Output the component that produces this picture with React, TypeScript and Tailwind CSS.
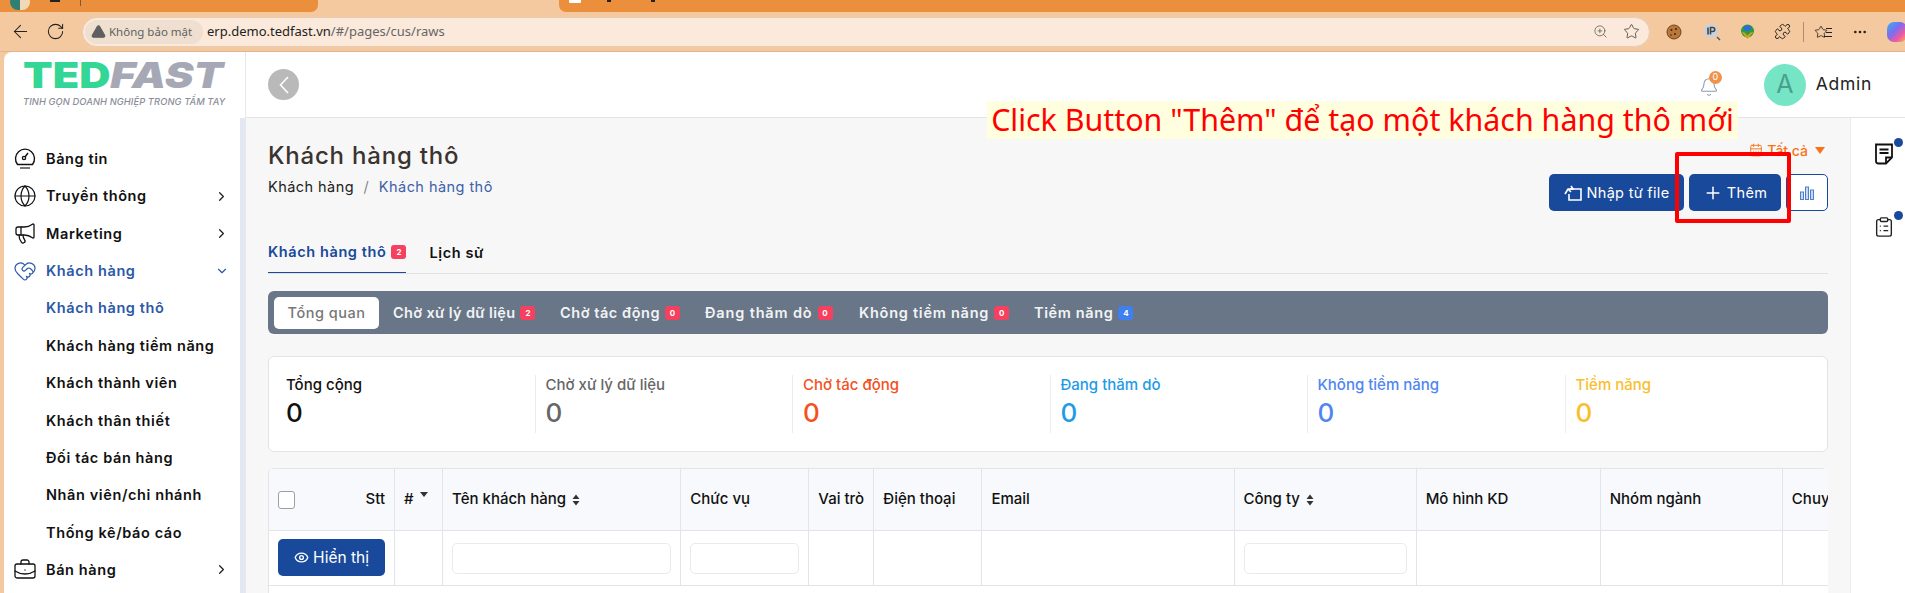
import React from "react";
import {
  ArrowLeft,
  ChevronDown,
  ChevronRight,
  ClipboardList,
  Eye,
  Globe,
  HeartHandshake,
  Megaphone,
  BriefcaseBusiness,
  Plus,
  Puzzle,
  RotateCw,
  Star,
  ZoomIn,
  Bell,
  Ellipsis,
  CalendarDays,
  TriangleAlert,
} from "lucide-react";

const ui = "font-['Inter',sans-serif]";

function GaugeIcon() {
  return (
    <svg width="22" height="22" viewBox="0 0 22 22" fill="none" stroke="#111" strokeWidth="1.4">
      <path d="M3.5 16.5a9.5 9.5 0 1 1 15 0z" />
      <circle cx="10" cy="10" r="1.6" />
      <path d="M11 9l3-4" />
      <path d="M6 20h10" stroke="#777" strokeWidth="2" />
    </svg>
  );
}

function NavItem({
  label,
  icon,
  arrow,
  active,
}: {
  label: string;
  icon?: React.ReactNode;
  arrow?: "right" | "down";
  active?: boolean;
}) {
  return (
    <div className={`flex h-[37.4px] items-center pr-[11px] ${active ? "text-[#2c58a8]" : "text-[#111]"}`}>
      <div className="flex w-[42px] shrink-0 justify-center">{icon}</div>
      <span className="flex-1 text-[14.5px] font-semibold tracking-[0.6px]">{label}</span>
      {arrow === "right" && <ChevronRight size={15} strokeWidth={2} color="#222" />}
      {arrow === "down" && <ChevronDown size={14} strokeWidth={2} color="#2c58a8" />}
    </div>
  );
}

function Badge({ n, blue }: { n: number; blue?: boolean }) {
  return (
    <span
      className={`ml-[5px] flex h-[14px] w-[15px] items-center justify-center rounded-[3px] text-[8px] font-bold tracking-normal text-white ${
        blue ? "bg-[#3f7ff0]" : "bg-[#f5405f]"
      }`}>
      {n}
    </span>
  );
}

const pills = [
  { label: "Chờ xử lý dữ liệu", n: 2, w: "w-[167px] tracking-[0.35px]" },
  { label: "Chờ tác động", n: 0, w: "w-[145px] tracking-[0.55px]" },
  { label: "Đang thăm dò", n: 0, w: "w-[154px] tracking-[0.85px]" },
  { label: "Không tiềm năng", n: 0, w: "w-[175px] tracking-[0.75px]" },
  { label: "Tiềm năng", n: 4, w: "w-[120px] tracking-[0.62px]", blue: true },
];

const stats = [
  { label: "Tổng cộng", color: "text-[#111]" },
  { label: "Chờ xử lý dữ liệu", color: "text-[#666]" },
  { label: "Chờ tác động", color: "text-[#f4511e]" },
  { label: "Đang thăm dò", color: "text-[#1e9be8]" },
  { label: "Không tiềm năng", color: "text-[#4f86f0]" },
  { label: "Tiềm năng", color: "text-[#fbbd2c]" },
];

function SortIcon() {
  return (
    <svg width="8" height="12" viewBox="0 0 8 12" fill="#333" className="ml-[6px]">
      <path d="M4 0.5 7.5 5h-7zM4 11.5.5 7h7z" />
    </svg>
  );
}

const colWidths = ["w-[126px]", "w-[48px]", "w-[238px]", "w-[128px]", "w-[65px]", "w-[108px]", "w-[252px]", "w-[182px]", "w-[184px]", "w-[182px]", "w-[120px]"];

function Th({ children, className = "" }: { children?: React.ReactNode; className?: string }) {
  return (
    <th className={`h-[63px] border-r border-b border-t border-[#e2e4e9] bg-[#f7f9fc] px-[9px] text-left text-[15px] font-medium text-[#111] ${className}`}>
      {children}
    </th>
  );
}

function FilterInput() {
  return <div className="h-[31px] rounded-[5px] border border-[#e9eaec] bg-white" />;
}

export default function App() {
  return (
    <div className={`flex h-[593px] w-[1905px] flex-col overflow-hidden bg-[#f5c9a0] ${ui}`}>
      {/* Browser tabs */}
      <div className="relative flex h-3 shrink-0 overflow-hidden bg-[#f5c9a0]">
        <div className="flex h-3 w-[318px] items-start rounded-br-[7px] bg-[#ec8f3c]">
          <div className="ml-[10px] -mt-[6px] h-[16px] w-[20px] rounded-full bg-[linear-gradient(90deg,#2f7f74_50%,#f0d9b5_50%)]" />
          <div className="ml-[20px] h-[2px] w-[10px] bg-[#222]" />
          <div className="ml-[20px] h-[6px] w-px bg-[#7a5a3a]" />
        </div>
        <div className="ml-[241px] flex h-3 flex-1 items-start rounded-bl-[7px] bg-[#ec8f3c] pl-[10px]">
          <div className="h-[3px] w-[12px] rounded-b-[1px] bg-white" />
          <div className="ml-[26px] h-[2px] w-[4px] bg-[#222]" />
          <div className="ml-[40px] h-[2px] w-[4px] bg-[#222]" />
        </div>
      </div>

      {/* Browser toolbar */}
      <div className="flex h-10 shrink-0 items-center overflow-hidden border-b border-[#e0b48c] bg-[#f5c9a0]">
        <div className="flex w-[82px] shrink-0 items-center pl-[10px] text-[#222]">
          <ArrowLeft size={21} strokeWidth={1.2} />
          <RotateCw size={19} strokeWidth={1.3} className="ml-[15px]" />
        </div>
        <div className="flex h-[30px] w-[1568px] shrink-0 items-center rounded-full border border-[#e8cdb2] bg-[#fbeadb] pl-[2px] pr-[9px]">
          <div className="flex h-[24px] w-[118px] items-center gap-[3px] rounded-full bg-[#efdfd0] pl-[6px] text-[11.5px] text-[#5f5f5f]">
            <TriangleAlert size={15} fill="#5f5f5f" color="#5f5f5f" />
            <span className="font-['Noto_Sans',sans-serif] whitespace-nowrap">Không bảo mật</span>
          </div>
          <span className="ml-[4px] flex-1 font-['Noto_Sans',sans-serif] text-[13px] text-[#222]">
            erp.demo.tedfast.vn<span className="text-[#666]">/#/pages/cus/raws</span>
          </span>
          <ZoomIn size={15} strokeWidth={1.2} color="#555" />
          <Star size={17} strokeWidth={1.2} color="#444" className="ml-[15px]" />
        </div>
        <div className="flex flex-1 items-center pl-[16px] text-[#222]">
          <svg width="16" height="16" viewBox="0 0 16 16" className="shrink-0">
            <circle cx="8" cy="8" r="7" fill="#b9783a" stroke="#6f4520" />
            <circle cx="5.5" cy="6" r="1" fill="#3f2410" />
            <circle cx="10" cy="5" r="1" fill="#3f2410" />
            <circle cx="9" cy="10" r="1" fill="#3f2410" />
            <circle cx="5" cy="11" r="0.8" fill="#3f2410" />
          </svg>
          <svg width="18" height="18" viewBox="0 0 18 18" className="ml-[21px] shrink-0">
            <circle cx="8" cy="8" r="7" fill="#c7d2de" />
            <path d="M14 14l3 3" stroke="#555" strokeWidth="1.5" />
            <path d="M5 4.5v7" stroke="#444" strokeWidth="1.6" />
            <path d="M7.5 11.5v-7h2.200a2 2 0 0 1 0 4h-2.200" stroke="#444" strokeWidth="1.6" fill="none" />
          </svg>
          <svg width="17" height="17" viewBox="0 0 17 17" className="ml-[18px] shrink-0">
            <circle cx="8.500" cy="8" r="6.500" fill="#2f9a3d" />
            <path d="M4 4a7 7 0 0 1 9 0l-3 4H6z" fill="#2a6fd6" />
            <path d="M2.500 9l6 7 6-7-3 .5-3 3-3-3z" fill="#d2a21a" />
          </svg>
          <Puzzle size={17} strokeWidth={1.4} className="ml-[18px] shrink-0" />
          <div className="ml-[12px] h-[20px] w-px shrink-0 bg-[#a98f78]" />
          <div className="relative ml-[10px] h-[18px] w-[18px] shrink-0">
            <Star size={14} strokeWidth={1.4} className="absolute left-0 top-[2px]" />
            <div className="absolute right-0 top-[5px] h-px w-[6px] bg-[#222]" />
            <div className="absolute right-0 top-[9px] h-px w-[6px] bg-[#222]" />
            <div className="absolute right-0 top-[13px] h-px w-[8px] bg-[#222]" />
          </div>
          <Ellipsis size={16} className="ml-[20px] shrink-0" />
          <div className="ml-[19px] h-[20px] w-[20px] shrink-0 rounded-[7px] bg-[linear-gradient(135deg,#35b6f0_0%,#7a6cf0_40%,#f05aa0_70%,#f5c24a_100%)]" />
        </div>
      </div>

      {/* App */}
      <div className="flex min-h-0 flex-1 pl-1">
        {/* Sidebar */}
        <aside className="flex w-[242px] shrink-0 flex-col overflow-hidden rounded-tl-[8px] border-r border-[#e8e8ec] bg-white">
          <div className="flex h-[88px] shrink-0 flex-col pl-[19px] pt-[8px]">
            <div className="flex h-[30px] origin-left scale-x-[1.2] items-center whitespace-nowrap text-[36px] font-black leading-none">
              <span className="text-[#33d695]">TED</span>
              <span className="italic text-[#a6a9b5]">FAST</span>
            </div>
            <div className="mt-[5px] whitespace-nowrap text-[9.3px] font-medium italic tracking-[0.1px] text-[#8b8e99]">
              TINH GỌN DOANH NGHIỆP TRONG TẦM TAY
            </div>
          </div>
          <div className="flex min-h-0 flex-1">
            <nav className="min-w-0 flex-1">
              <NavItem label="Bảng tin" icon={<GaugeIcon />} />
              <NavItem label="Truyền thông" icon={<Globe size={24} strokeWidth={1.2} />} arrow="right" />
              <NavItem label="Marketing" icon={<Megaphone size={24} strokeWidth={1.3} />} arrow="right" />
              <NavItem label="Khách hàng" icon={<HeartHandshake size={24} strokeWidth={1.2} />} arrow="down" active />
              <NavItem label="Khách hàng thô" active />
              <NavItem label="Khách hàng tiềm năng" />
              <NavItem label="Khách thành viên" />
              <NavItem label="Khách thân thiết" />
              <NavItem label="Đối tác bán hàng" />
              <NavItem label="Nhân viên/chi nhánh" />
              <NavItem label="Thống kê/báo cáo" />
              <NavItem label="Bán hàng" icon={<BriefcaseBusiness size={24} strokeWidth={1.3} />} arrow="right" />
            </nav>
            <div className="-mt-[22px] w-[5px] shrink-0 bg-[#e3e7f1]" />
          </div>
        </aside>

        <div className="flex min-w-0 flex-1 flex-col">
          {/* Top header */}
          <header className="flex h-[66px] shrink-0 items-center border-b border-[#e4e4e4] bg-white pl-[22px]">
            <div className="flex h-[31px] w-[31px] items-center justify-center rounded-full bg-[#b9b9b9]">
              <svg width="12" height="20" viewBox="0 0 12 20" fill="none" stroke="white" strokeWidth="1.6">
                <path d="M10 2 2.500 10 10 18" />
              </svg>
            </div>
            <div className="relative ml-auto mt-[4px] h-[20px] w-[20px]">
              <Bell size={20} strokeWidth={1.3} color="#8d9bb0" />
              <div className="absolute -right-[3px] -top-[6px] flex h-[13px] w-[13px] items-center justify-center rounded-full bg-[#f0934a] text-[9px] text-white">
                0
              </div>
            </div>
            <div className="ml-[45px] flex h-[42px] w-[42px] items-center justify-center rounded-full bg-[#75e5c5] text-[25px] text-[#4a9f8c]">
              A
            </div>
            <span className="ml-[10px] mr-[33px] text-[17.500px] tracking-[0.7px] text-[#222]">Admin</span>
          </header>

          <div className="flex min-h-0 flex-1">
            {/* Page */}
            <main className="min-w-0 flex-1 border-r border-[#ececec] bg-[#f7f7f7] pl-[22px] pr-[22px]">
              <div className="flex h-[156px] flex-col border-b border-[#e2e2e2]">
                <div className="flex h-[104px] shrink-0 justify-between">
                  <div className="pt-[23px]">
                    <h1 className="text-[24px] font-medium leading-[30px] tracking-[0.8px] text-[#3a3330]">Khách hàng thô</h1>
                    <div className="mt-[6px] text-[14.5px] leading-[20px] tracking-[0.45px] text-[#222]">
                      Khách hàng <span className="mx-[5px] text-[#888]">/</span> <span className="text-[#3d62a8]">Khách hàng thô</span>
                    </div>
                  </div>
                  <div className="flex flex-col items-end">
                    <div className="mt-[24px] flex h-[16px] items-center pr-[3px] text-[14px] font-medium text-[#f97316]">
                      <CalendarDays size={14} strokeWidth={1.6} className="mr-[4px]" />
                      Tất cả
                      <svg width="10" height="7" viewBox="0 0 10 7" fill="#f97316" className="ml-[7px]">
                        <path d="M0 0h10L5 7z" />
                      </svg>
                    </div>
                    <div className="mt-[16px] flex h-[37px] tracking-[0.3px]">
                      <button className="flex w-[135px] items-center justify-center gap-[5px] rounded-[5px] bg-[#19499a] text-[14.5px] text-white">
                        <svg width="18" height="16" viewBox="0 0 18 16" fill="none" stroke="white" strokeWidth="1.6">
                          <path d="M6 4h11v11H5V9" />
                          <path d="M1 9l3-5h5L7 1M4 4l3 3" />
                        </svg>
                        Nhập từ file
                      </button>
                      <button className="ml-[5px] flex w-[92px] items-center justify-center gap-[4px] rounded-[5px] bg-[#19499a] text-[14.5px] text-white">
                        <Plus size={20} strokeWidth={1.8} />
                        Thêm
                      </button>
                      <button className="ml-[5px] flex w-[42px] items-center justify-center rounded-[5px] border border-[#19499a] bg-white">
                        <svg width="14" height="14" viewBox="0 0 14 14" fill="#c8d8f2" stroke="#4d7fd0" strokeWidth="1">
                          <rect x="0.500" y="6" width="3" height="7.500" />
                          <rect x="5.500" y="1" width="3" height="12.500" />
                          <rect x="10.500" y="4" width="3" height="9.500" />
                        </svg>
                      </button>
                    </div>
                  </div>
                </div>
                <div className="flex flex-1 items-end text-[14.5px] font-semibold tracking-[0.6px]">
                  <div className="flex h-[44px] items-center border-b border-[#19499a] pt-[3px] text-[#19499a]">
                    Khách hàng thô
                    <Badge n={2} />
                  </div>
                  <div className="ml-[23px] flex h-[44px] items-center pt-[3px] text-[#111]">Lịch sử</div>
                </div>
              </div>

              {/* Filter pills */}
              <div className="mt-[17px] flex h-[43px] items-center rounded-[6px] bg-[#687687] pl-[6px] text-[14.5px] font-semibold text-[#f1f3f5]">
                <div className="mr-[14px] flex h-[32px] w-[105px] items-center justify-center rounded-[5px] bg-white font-medium tracking-[0.5px] text-[#777]">
                  Tổng quan
                </div>
                {pills.map((p) => (
                  <div key={p.label} className={`flex items-center ${p.w}`}>
                    {p.label}
                    <Badge n={p.n} blue={p.blue} />
                  </div>
                ))}
              </div>

              {/* Stats */}
              <div className="mt-[22px] grid h-[96px] grid-cols-[265.500px_257.500px_257.500px_257px_258px_1fr] items-center rounded-[6px] border border-[#e4e4e4] bg-white">
                {stats.map((s, i) => (
                  <div
                    key={s.label}
                    className={`h-[58px] border-[#ececec] ${i === 0 ? "pl-[17px]" : "border-l pl-[10px]"} ${s.color}`}>
                    <div className="text-[15px] font-medium leading-[20px]">{s.label}</div>
                    <div className="mt-[3px] text-[26px] font-medium leading-[30px]">0</div>
                  </div>
                ))}
              </div>

              {/* Table */}
              <div className="mt-[16px] min-h-[160px] overflow-hidden rounded-t-[6px] border-l border-[#e2e4e9] bg-white">
                <table className="w-[1634px] table-fixed border-separate border-spacing-0">
                  <colgroup>
                    {colWidths.map((w, i) => (
                      <col key={i} className={w} />
                    ))}
                  </colgroup>
                  <thead>
                    <tr>
                      <Th>
                        <div className="flex items-center justify-between">
                          <div className="h-[18px] w-[17px] rounded-[3px] border border-[#9aa0a8] bg-white" />
                          <span>Stt</span>
                        </div>
                      </Th>
                      <Th>
                        <div className="flex items-start">
                          #
                          <svg width="8" height="5" viewBox="0 0 8 5" fill="#333" className="ml-[6px] mt-[4px]">
                            <path d="M0 0h8L4 5z" />
                          </svg>
                        </div>
                      </Th>
                      <Th>
                        <div className="flex items-center">
                          Tên khách hàng
                          <SortIcon />
                        </div>
                      </Th>
                      <Th>Chức vụ</Th>
                      <Th className="whitespace-nowrap">Vai trò</Th>
                      <Th className="whitespace-nowrap">Điện thoại</Th>
                      <Th>Email</Th>
                      <Th>
                        <div className="flex items-center">
                          Công ty
                          <SortIcon />
                        </div>
                      </Th>
                      <Th>Mô hình KD</Th>
                      <Th>Nhóm ngành</Th>
                      <Th className="whitespace-nowrap">Chuyên ngành</Th>
                    </tr>
                  </thead>
                  <tbody>
                    <tr className="h-[55px]">
                      <td className="border-r border-b border-[#e2e4e9] px-[9px] align-top pt-[8px]">
                        <button className="flex h-[37px] w-full items-center justify-center gap-[4px] rounded-[5px] bg-[#19499a] text-[15.5px] text-white">
                          <Eye size={15} strokeWidth={2.2} />
                          Hiển thị
                        </button>
                      </td>
                      <td className="border-r border-b border-[#e2e4e9]" />
                      <td className="border-r border-b border-[#e2e4e9] px-[9px]">
                        <FilterInput />
                      </td>
                      <td className="border-r border-b border-[#e2e4e9] px-[9px]">
                        <FilterInput />
                      </td>
                      <td className="border-r border-b border-[#e2e4e9]" />
                      <td className="border-r border-b border-[#e2e4e9]" />
                      <td className="border-r border-b border-[#e2e4e9]" />
                      <td className="border-r border-b border-[#e2e4e9] px-[9px]">
                        <FilterInput />
                      </td>
                      <td className="border-r border-b border-[#e2e4e9]" />
                      <td className="border-r border-b border-[#e2e4e9]" />
                      <td className="border-r border-b border-[#e2e4e9]" />
                    </tr>
                  </tbody>
                </table>
              </div>
            </main>

            {/* Right panel */}
            <div className="flex w-[54px] shrink-0 flex-col items-center bg-white pl-[12px] pt-[25px]">
              <div className="relative h-[22px] w-[22px]">
                <svg width="22" height="22" viewBox="0 0 22 22" fill="none" stroke="#111" strokeWidth="1.8">
                  <path d="M3 1.500h16v13l-6 6H5.500a2.500 2.500 0 0 1-2.500-2.500z" />
                  <path d="M6.500 6.500h9M6.500 10h9M13 20v-5.500h6" />
                </svg>
                <div className="absolute -right-[8px] -top-[5px] h-[9px] w-[9px] rounded-full bg-[#19499a]" />
              </div>
              <div className="relative mt-[51px] h-[22px] w-[22px]">
                <ClipboardList size={22} strokeWidth={1.5} color="#222" />
                <div className="absolute -right-[8px] -top-[5px] h-[9px] w-[9px] rounded-full bg-[#19499a]" />
              </div>
            </div>
          </div>
        </div>
      </div>

      {/* Annotation over the screenshot */}
      <div className="absolute left-[987px] top-[101px] flex h-[38px] w-[751px] items-center justify-center whitespace-nowrap bg-[#ffffe0] font-['Noto_Sans',sans-serif] text-[30.4px] text-[#ff0000]">
        Click Button "Thêm" để tạo một khách hàng thô mới
      </div>
      <div className="absolute left-[1675px] top-[152px] h-[71px] w-[116px] rounded-[2px] border-[4px] border-[#ff0000]" />
    </div>
  );
}
